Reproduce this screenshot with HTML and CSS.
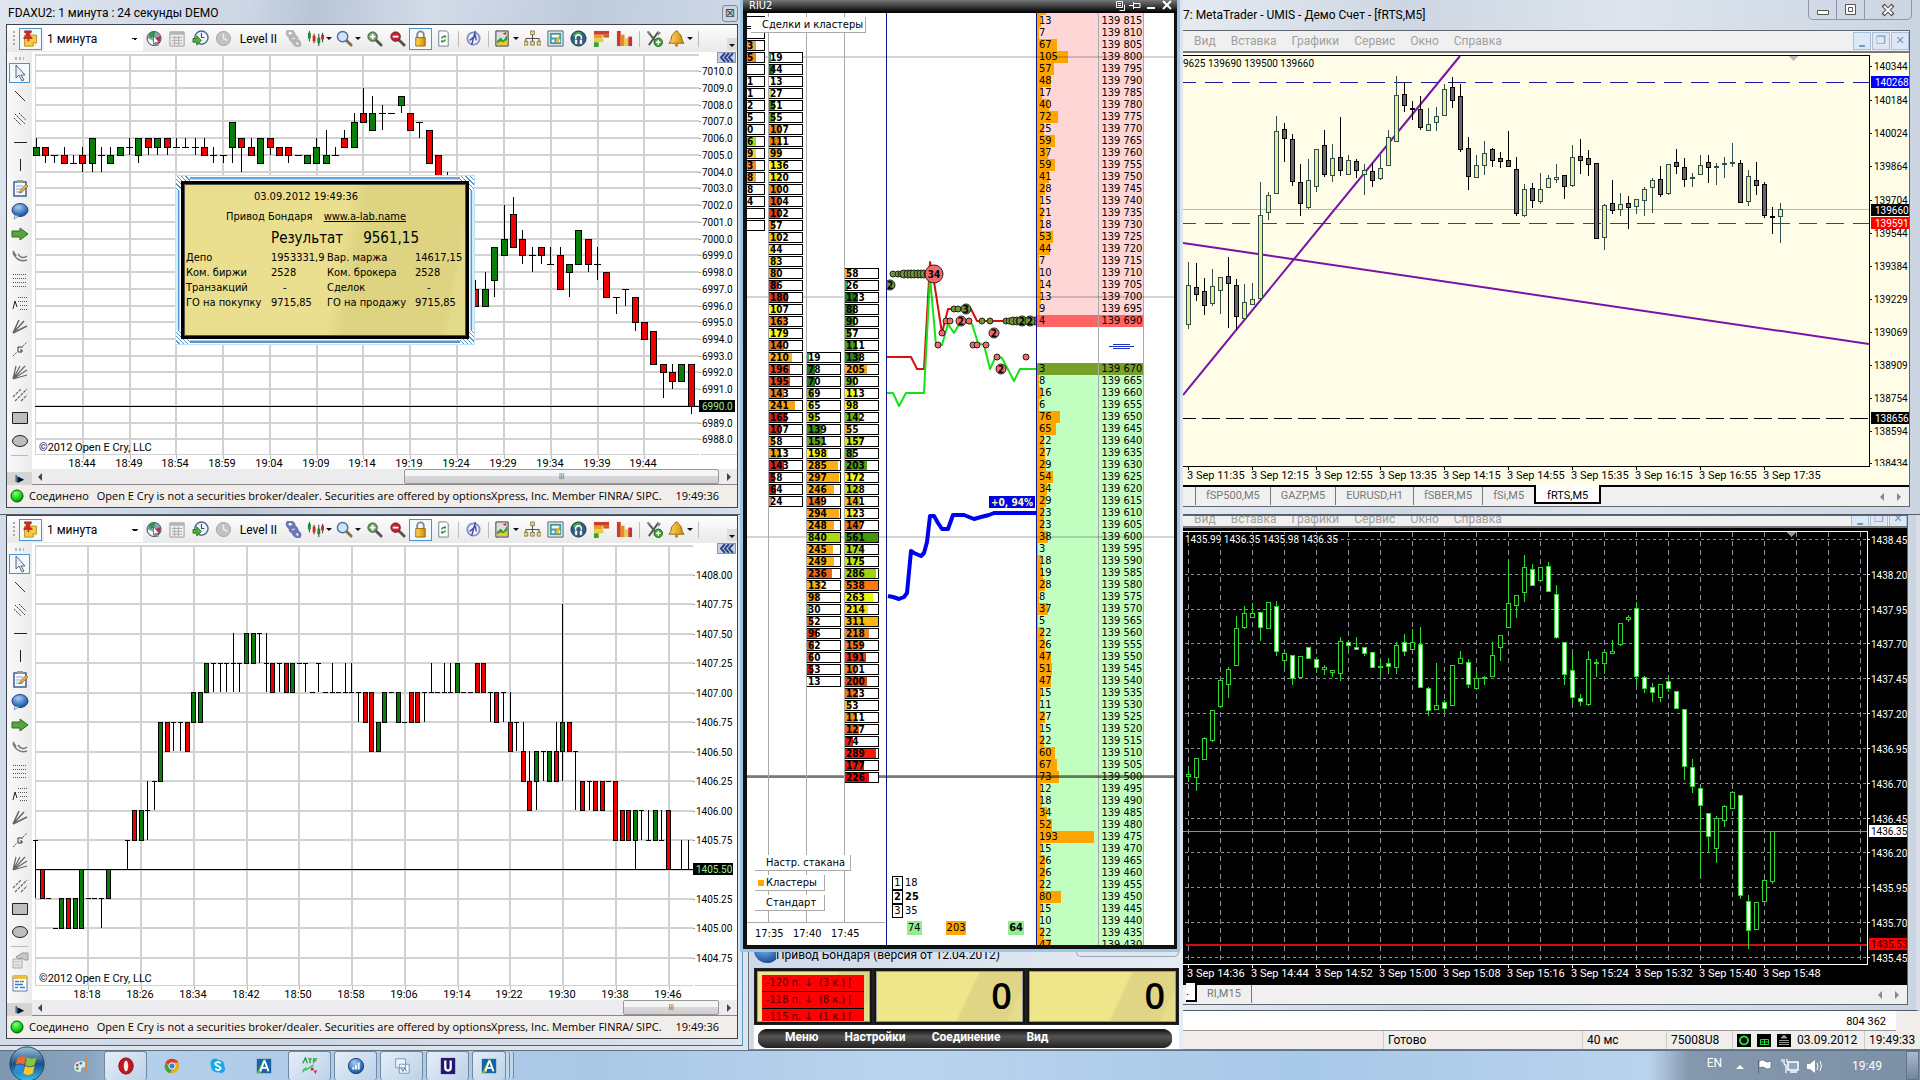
FILE: index.html
```html
<!DOCTYPE html>
<html lang="ru">
<head>
<meta charset="utf-8">
<title>Торговый стол</title>
<link rel="stylesheet" href="styles.css">
</head>
<body>
<svg class="defs" aria-hidden="true">
  <defs>
    <linearGradient id="gOrb" x1="0" y1="0" x2="0" y2="1"><stop offset="0" stop-color="#9fc4dc"/><stop offset=".5" stop-color="#1d4f86"/><stop offset="1" stop-color="#36c3f0"/></linearGradient>
    <radialGradient id="gBall" cx=".4" cy=".3" r=".8"><stop offset="0" stop-color="#8aff7a"/><stop offset=".6" stop-color="#0ad20a"/><stop offset="1" stop-color="#056b05"/></radialGradient>
    <radialGradient id="gBlue" cx=".4" cy=".3" r=".8"><stop offset="0" stop-color="#a9cdf2"/><stop offset=".6" stop-color="#3a78c0"/><stop offset="1" stop-color="#153f7e"/></radialGradient>
    <linearGradient id="gGold" x1="0" y1="0" x2="1" y2="0"><stop offset="0" stop-color="#ffd860"/><stop offset="1" stop-color="#d08a08"/></linearGradient>
  </defs>
  <symbol id="pin" viewBox="0 0 20 20"><path d="M3 6h14v9l-4 4H3z" fill="#f5cc45" stroke="#b08a10"/><path d="M13 19v-4h4" fill="#fff2a8" stroke="#b08a10"/><path d="M3 1h8v2l-2 1v3l3 2v1H8v3H7v-3H2V9l3-2V4L3 3z" fill="#d92626" stroke="#8a1010" stroke-width=".6"/></symbol>
  <symbol id="globe" viewBox="0 0 18 18"><circle cx="8.500" cy="9" r="7.500" fill="#8fa3b8" stroke="#4b5866"/><path d="M3 4q4-4 7-1l-2 4-4 2z" fill="#2c9a48"/><path d="M9 9l7-3-2 8z" fill="#c92a4a"/><path d="M2 9l5 2 1 5q-6-2-6-7z" fill="#fff"/><path d="M8 6v9l2-2 2 4 1-1-2-3h3z" fill="#fff" stroke="#333" stroke-width=".6"/></symbol>
  <symbol id="cal" viewBox="0 0 18 18"><path d="M1 2h15v15H1z" fill="#eee" stroke="#999"/><path d="M1 2h15v3H1z" fill="#b5b5b5"/><path d="M3 8h11M3 11h11M3 14h11M6 6v10M10 6v10" stroke="#aaa"/></symbol>
  <symbol id="clock" viewBox="0 0 18 18"><circle cx="10" cy="8" r="7" fill="#eef5fb" stroke="#4b6b8c" stroke-width="1.500"/><path d="M10 3v5h3" stroke="#234" fill="none"/><path d="M1 9h4V6l5 5-5 5v-3H1z" fill="#4fae3c" stroke="#1c6a16" stroke-width=".8"/></symbol>
  <symbol id="clockg" viewBox="0 0 18 18"><circle cx="9" cy="9" r="7.500" fill="#c2c2c2" stroke="#a5a5a5"/><path d="M9 4v5l4 2" stroke="#eee" fill="none" stroke-width="1.500"/></symbol>
  <symbol id="chain" viewBox="0 0 18 18"><g fill="none" stroke="currentColor" stroke-width="3"><rect x="2" y="1" width="8" height="6" rx="3" transform="rotate(40 6 4)"/><rect x="5" y="6" width="8" height="6" rx="3" transform="rotate(40 9 9)"/><rect x="8" y="11" width="8" height="5" rx="3" transform="rotate(40 12 14)"/></g></symbol>
  <symbol id="bars" viewBox="0 0 18 18"><path d="M2.500 1v11M7.500 4v10M12.500 4v13M16.500 3v10" stroke="#333"/><path d="M1 3h3v6H1z" fill="#1a8a2a"/><path d="M6 6h3v6H6z" fill="#d22"/><path d="M11 8h3v6h-3z" fill="#1a8a2a"/><path d="M15 5h3v5h-3z" fill="#d22"/></symbol>
  <symbol id="lens" viewBox="0 0 18 18"><path d="M10 10l6 6" stroke="#8a6a40" stroke-width="3" stroke-linecap="round"/><circle cx="7" cy="7" r="5.500" fill="#cfe2f7" stroke="#4a6fa5" stroke-width="1.500"/></symbol>
  <symbol id="plus" viewBox="0 0 18 18"><path d="M10 10l6 6" stroke="#555" stroke-width="3" stroke-linecap="round"/><circle cx="7" cy="7" r="5" fill="#6d9c62" stroke="#3c5d37"/><path d="M4 7h6M7 4v6" stroke="#fff" stroke-width="2"/></symbol>
  <symbol id="minus" viewBox="0 0 18 18"><path d="M10 10l6 6" stroke="#555" stroke-width="3" stroke-linecap="round"/><circle cx="7" cy="7" r="5" fill="#c3222e" stroke="#7a1018"/><path d="M4 7h6" stroke="#fff" stroke-width="2"/></symbol>
  <symbol id="lock" viewBox="0 0 18 18"><path d="M5.500 9V5a3.500 3.500 0 0 1 7 0v4" fill="none" stroke="#8a8a8a" stroke-width="2"/><path d="M4 8h10v9H4z" fill="url(#gGold)" stroke="#9a6a08"/></symbol>
  <symbol id="refresh" viewBox="0 0 18 18"><path d="M4 1h8l2 2v14H4z" fill="#fff" stroke="#6c7f94"/><path d="M7 9a3 3 0 0 1 4-2M11 10a3 3 0 0 1-4 2" fill="none" stroke="#2e8b3a" stroke-width="1.500"/><path d="M10 5l2 2-2 2zM8 10l-2 2 2 2z" fill="#2e8b3a"/></symbol>
  <symbol id="compass" viewBox="0 0 18 18"><circle cx="9" cy="9" r="6.500" fill="#eef" stroke="#8890c8" stroke-width="2"/><path d="M7 16L11 1M5 11l6-5 1 5" fill="none" stroke="#4450a0" stroke-width="1.500"/></symbol>
  <symbol id="chart" viewBox="0 0 18 18"><path d="M2 1h13v16H2z" fill="#ddd" stroke="#333"/><path d="M3 12l4-4 3 3 4-6v11H3z" fill="#2e9a3c"/><path d="M3 14l4-2 3 1 4-3v6H3z" fill="#e8c830"/><path d="M9 4l4-2v3z" fill="#c22"/></symbol>
  <symbol id="tree" viewBox="0 0 18 18"><path d="M9 4v5M2 13V9h14v4M9 9v4" fill="none" stroke="#444"/><path d="M7 1h4v4H7zM0 12h4v4H0zM7 12h4v4H7zM14 12h4v4h-4z" fill="#e8d48a" stroke="#7a6a30" stroke-width=".8"/></symbol>
  <symbol id="map" viewBox="0 0 18 18"><path d="M1 1h16v16H1z" fill="#e9eef2" stroke="#556"/><path d="M3 3h12v12H3z" fill="#3aa0a0"/><path d="M5 5h8v3H5zM5 10h3v3H5zM10 10h4v3h-4z" fill="#fff"/><path d="M10 7h3v6h-3z" fill="#e8b838"/></symbol>
  <symbol id="phones" viewBox="0 0 18 18"><circle cx="9" cy="9" r="8" fill="#2d5f8a" stroke="#234"/><path d="M3 5q5-5 9-2l-3 4-4 1z" fill="#3fae50"/><path d="M6 13V8a3 3 0 0 1 6 0v5" fill="none" stroke="#fff" stroke-width="1.500"/><path d="M5 10h3v5H5zM10 10h3v5h-3z" fill="#fff" stroke="#333" stroke-width=".5"/></symbol>
  <symbol id="hbars" viewBox="0 0 18 18"><path d="M1 1h16v4H1z" fill="#d03a2a"/><path d="M1 5h9v4H1z" fill="#e8a020"/><path d="M1 9h10v4H1z" fill="#e8cf40"/><path d="M11 5h6v3h-6z" fill="#c86020"/><path d="M1 13h5v5H1z" fill="#3fa03a"/></symbol>
  <symbol id="vbars" viewBox="0 0 18 18"><path d="M1 1h4v16H1z" fill="#d03a2a"/><path d="M5 5h4v12H5z" fill="#e88a20"/><path d="M9 9h4v8H9z" fill="#e8cf40"/><path d="M13 7h4v10h-4z" fill="#c8303a"/></symbol>
  <symbol id="tools" viewBox="0 0 18 18"><path d="M3 16L13 2M2 2l10 12" stroke="#555" stroke-width="2" fill="none"/><path d="M12 1l4 2-3 3zM1 1l4 1-2 3z" fill="#888"/><circle cx="13" cy="13" r="4.500" fill="#43a53c" stroke="#1d6a18"/><path d="M10.500 13h5M13 10.500v5" stroke="#fff" stroke-width="1.500"/></symbol>
  <symbol id="bell" viewBox="0 0 18 18"><path d="M9 1q2 0 2 2 4 2 4 8l2 3H1l2-3q0-6 4-8 0-2 2-2z" fill="url(#gGold)" stroke="#9a6008"/><circle cx="9" cy="16" r="1.800" fill="#c08010"/></symbol>
  <symbol id="t-cursor" viewBox="0 0 18 18"><path d="M5 1v13l3-3 3 6 2-1-3-5h4z" fill="#eef" stroke="#567"/></symbol>
  <symbol id="t-line" viewBox="0 0 18 18"><path d="M4 4l10 10" stroke="#333"/></symbol>
  <symbol id="t-par" viewBox="0 0 18 18"><path d="M3 8l7 7M4 4l10 10M8 3l7 7" stroke="#333" stroke-dasharray="2 1"/></symbol>
  <symbol id="t-h" viewBox="0 0 18 18"><path d="M3 9.500h13" stroke="#222"/></symbol>
  <symbol id="t-v" viewBox="0 0 18 18"><path d="M9.500 3v12" stroke="#222"/></symbol>
  <symbol id="t-note" viewBox="0 0 18 18"><path d="M3 3h12v14H3z" fill="#f7fafd" stroke="#3c5f92" stroke-width="1.500"/><path d="M6 1h6v3H6z" fill="#99a"/><path d="M5 7h7M5 10h6M5 13h7" stroke="#8aa5c8"/><path d="M9 12l6-7 2 2-6 6-3 1z" fill="#f0b030" stroke="#765010" stroke-width=".6"/></symbol>
  <symbol id="t-talk" viewBox="0 0 18 18"><ellipse cx="9" cy="8" rx="8" ry="6.500" fill="url(#gBlue)" stroke="#27427a"/><path d="M4 13l-1 4 5-3z" fill="#d5dff0" stroke="#5570a0" stroke-width=".6"/></symbol>
  <symbol id="t-arrow" viewBox="0 0 18 18"><path d="M1 6h8V3l8 6-8 6v-3H1z" fill="#5aa53a" stroke="#2f6a1c"/></symbol>
  <symbol id="t-arc" viewBox="0 0 18 18"><path d="M2 5q5 10 14 7M2 3l3 5M7 6q4 6 9 2" fill="none" stroke="#777" stroke-width="1.500"/></symbol>
  <symbol id="t-dots" viewBox="0 0 18 18"><path d="M2 3.500h14M2 7.500h14M2 11.500h14M2 15.500h14" stroke="#555" stroke-dasharray="1 1"/></symbol>
  <symbol id="t-adots" viewBox="0 0 18 18"><path d="M7 3.500h10M7 7.500h10M9 11.500h8M9 15.500h8" stroke="#555" stroke-dasharray="1 1"/><path d="M2 15l2-8 2 6" fill="none" stroke="#222"/></symbol>
  <symbol id="t-fan" viewBox="0 0 18 18"><path d="M2 16L8 3M2 16L13 4M2 16l14-7" stroke="#666" stroke-width="1.500"/></symbol>
  <symbol id="t-g" viewBox="0 0 18 18"><path d="M2 16l4-4M12 6l4-4" stroke="#555" stroke-dasharray="2 1"/><path d="M12 7H7v5h4V10H9" fill="none" stroke="#333"/></symbol>
  <symbol id="t-fan2" viewBox="0 0 18 18"><path d="M2 16L5 3M2 16L9 3M2 16L14 3M2 16L16 7M2 16l14-4" stroke="#666" stroke-width="1.200"/></symbol>
  <symbol id="t-chan" viewBox="0 0 18 18"><path d="M2 11l8-8M4 15L16 3M10 15l6-6" stroke="#666" stroke-width="1.200" stroke-dasharray="3 1"/></symbol>
  <symbol id="t-rect" viewBox="0 0 18 18"><path d="M1.500 3.500h15v11h-15z" fill="#bdbdbd" stroke="#222"/></symbol>
  <symbol id="t-ell" viewBox="0 0 18 18"><ellipse cx="9" cy="9" rx="7.500" ry="5.500" fill="#bdbdbd" stroke="#222"/></symbol>
  <symbol id="t-prop" viewBox="0 0 18 18"><path d="M2 8h9v9H2z" fill="#e5e5e5" stroke="#aaa"/><path d="M4 11h5M4 14h5" stroke="#bbb"/><path d="M5 6l6-4h6v7h-3l-3-2-3 1z" fill="#c8c8c8" stroke="#999"/></symbol>
  <symbol id="t-list" viewBox="0 0 18 18"><path d="M2 2h14v15H2z" fill="#fff" stroke="#5a7fb0"/><path d="M2 2h14v3H2z" fill="#eebc3c"/><path d="M4 7.500h4M4 10.500h8M9 13.500h5" stroke="#3a78c0" stroke-width="1.500"/><path d="M9 7.500h4M4 13.500h3" stroke="#3aa050" stroke-width="1.500"/></symbol>
</svg>

<template id="toolbar">
  <span class="grip"></span>
  <button class="tb on" title="Закрепить"><svg><use href="#pin"/></svg></button>
  <select class="period" aria-label="Период"><option>1 минута</option></select>
  <button class="tb"><svg><use href="#globe"/></svg></button>
  <button class="tb"><svg><use href="#cal"/></svg></button>
  <button class="tb"><svg><use href="#clock"/></svg></button>
  <button class="tb"><svg><use href="#clockg"/></svg></button>
  <button class="tb level">Level II</button>
  <button class="tb link"><svg><use href="#chain"/></svg></button>
  <button class="tb drop"><svg><use href="#bars"/></svg></button>
  <button class="tb drop"><svg><use href="#lens"/></svg></button>
  <button class="tb"><svg><use href="#plus"/></svg></button>
  <button class="tb"><svg><use href="#minus"/></svg></button>
  <button class="tb on"><svg><use href="#lock"/></svg></button>
  <button class="tb"><svg><use href="#refresh"/></svg></button>
  <span class="vsep"></span>
  <button class="tb"><svg><use href="#compass"/></svg></button>
  <span class="vsep"></span>
  <button class="tb drop"><svg><use href="#chart"/></svg></button>
  <button class="tb"><svg><use href="#tree"/></svg></button>
  <button class="tb"><svg><use href="#map"/></svg></button>
  <button class="tb"><svg><use href="#phones"/></svg></button>
  <button class="tb"><svg><use href="#hbars"/></svg></button>
  <button class="tb"><svg><use href="#vbars"/></svg></button>
  <span class="vsep"></span>
  <button class="tb"><svg><use href="#tools"/></svg></button>
  <button class="tb drop"><svg><use href="#bell"/></svg></button>
  <span class="vsep"></span>
  <button class="more" aria-label="Ещё"></button>
</template>

<div class="desktop">
  <div class="col col-left">
    <section class="oec oec-top">
      <header class="oec-title"><span>FDAXU2: 1 минута : 24 секунды DEMO</span><button class="mini-close" aria-label="Закрыть">⊠</button></header>
      <div class="oec-body">
        <div class="toolbar"></div>
        <div class="oec-main">
          <nav class="toolbox"></nav>
          <div class="oec-chart">
            <div class="plot-row">
              <svg class="plot" id="dax-plot"></svg><svg class="axis w38" id="dax-axis"></svg>
              <button class="chevrons" aria-label="Свернуть"><svg viewBox="0 0 17 9"><path d="M7 0L3 4.500 7 9M11 0L7 4.500 11 9M15 0l-4 4.500L15 9"/></svg></button>
            </div>
            <svg class="times" id="dax-times"></svg>
            <div class="scroll"><i class="arr l"></i><span class="thumb wide">|||</span><i class="arr r"></i></div>
          </div>
        </div>
        <footer class="oec-status"><svg class="ball"><circle cx="7" cy="7" r="6" fill="url(#gBall)" stroke="#0a5a0a"/></svg><span class="state">Соединено</span><span class="legal">Open E Cry is not a securities broker/dealer. Securities are offered by optionsXpress, Inc. Member FINRA/ SIPC.</span><time>19:49:36</time></footer>
      </div>
    </section>

    <section class="oec oec-bottom">
      <div class="oec-body">
        <div class="toolbar linked"></div>
        <div class="oec-main">
          <nav class="toolbox more-tools"></nav>
          <div class="oec-chart">
            <div class="plot-row">
              <svg class="plot" id="es-plot"></svg><svg class="axis w44" id="es-axis"></svg>
              <button class="chevrons" aria-label="Свернуть"><svg viewBox="0 0 17 9"><path d="M7 0L3 4.500 7 9M11 0L7 4.500 11 9M15 0l-4 4.500L15 9"/></svg></button>
            </div>
            <svg class="times" id="es-times"></svg>
            <div class="scroll"><i class="arr l"></i><span class="thumb">|||</span><i class="arr r"></i></div>
          </div>
        </div>
        <footer class="oec-status"><svg class="ball"><circle cx="7" cy="7" r="6" fill="url(#gBall)" stroke="#0a5a0a"/></svg><span class="state">Соединено</span><span class="legal">Open E Cry is not a securities broker/dealer. Securities are offered by optionsXpress, Inc. Member FINRA/ SIPC.</span><time>19:49:36</time></footer>
      </div>
    </section>
  </div>

  <div class="col col-mid">
    <section class="riu">
      <header class="riu-title"><span>RIU2</span>
        <svg class="riu-icons" fill="none" stroke="#fff"><path d="M7.500 1.500h6v6h-6zM10.500 10.500h5v-6M9 3.500h3M9 5.500h3M20 5.500h4M24.500 2v7M25 3.500h6v4h-6"/><path d="M38 8h8" stroke-width="2"/><path d="M54 1l8 8M62 1l-8 8" stroke-width="2"/></svg>
      </header>
      <div class="riu-body">
        <div class="clusters">
          <div class="cluster-cols" id="clusters"></div>
          <div class="cluster-times"><span>17:35</span><span>17:40</span><span>17:45</span></div>
          <button class="flat head">Сделки и кластеры</button>
          <div class="flat-group">
            <button class="flat">Настр. стакана</button>
            <button class="flat marked">Кластеры</button>
            <button class="flat">Стандарт</button>
          </div>
        </div>
        <div class="trades">
          <svg id="trades"></svg>
          <ol class="lots"><li><b>1</b>18</li><li class="cur"><b>2</b>25</li><li><b>3</b>35</li></ol>
          <div class="sums"><span>74</span><span class="o">203</span><span class="last">64</span></div>
        </div>
        <div class="ladder"><div class="part"></div><table id="ladder"></table></div>
      </div>
    </section>

    <section class="privod">
      <header><svg class="pv-icon"><circle cx="13" cy="0" r="13" fill="url(#gBlue)"/></svg><span>Привод Бондаря (версия от 12.04.2012)</span><i></i></header>
      <div class="pv-panels">
        <div class="lcd orders"><ul><li>-120 п. ↓ &nbsp;(3 к.) [</li><li>-118 п. ↓ &nbsp;(8 к.) [</li><li>-115 п. ↓ &nbsp;(1 к.) [</li></ul></div>
        <div class="lcd num">0</div>
        <div class="lcd num">0</div>
      </div>
      <nav class="pv-menu"><a href="#m">Меню</a><a href="#s">Настройки</a><a href="#c">Соединение</a><a href="#v">Вид</a></nav>
    </section>
  </div>

  <div class="col col-right">
    <section class="mt mt-top">
      <header class="mt-title"><span>7: MetaTrader - UMIS - Демо Счет - [fRTS,M5]</span>
        <div class="caps"><button aria-label="Свернуть"><svg><path d="M8.500 10.500h11v4h-11z" fill="#fff" stroke="#555"/></svg></button><button aria-label="Развернуть"><svg><path d="M8.500 4.500h10v10h-10zM11.500 7.500h4v4h-4z" fill="#fff" stroke="#555"/></svg></button><button class="x" aria-label="Закрыть"><svg><path d="M18 5l10 10M28 5L18 15" stroke="#555" stroke-width="4"/><path d="M19 6l8 8M27 6l-8 8" stroke="#fff" stroke-width="2"/></svg></button></div>
      </header>
      <div class="mt-body">
        <nav class="mt-menu"><a href="#1">Вид</a><a href="#2">Вставка</a><a href="#3">Графики</a><a href="#4">Сервис</a><a href="#5">Окно</a><a href="#6">Справка</a><span class="mdi"><button>‗</button><button>❐</button><button>✕</button></span></nav>
        <div class="mt-chart light"><svg class="plot" id="rts-plot"></svg><svg class="axis w40" id="rts-axis"></svg></div>
        <svg class="mt-times light" id="rts-times"></svg>
        <nav class="tabs"><a href="#a">fSP500,M5</a><a href="#b">GAZP,M5</a><a href="#c1">EURUSD,H1</a><a href="#d">fSBER,M5</a><a href="#e">fSi,M5</a><a class="active" href="#f">fRTS,M5</a><i class="arr l"></i><i class="arr r"></i></nav>
      </div>
    </section>

    <section class="mt mt-bottom">
      <div class="mt-body">
        <nav class="mt-menu cut"><a href="#1">Вид</a><a href="#2">Вставка</a><a href="#3">Графики</a><a href="#4">Сервис</a><a href="#5">Окно</a><a href="#6">Справка</a><span class="mdi"><button>‗</button><button>❐</button><button>✕</button></span></nav>
        <div class="mt-chart dark"><svg class="plot" id="sp-plot"></svg><svg class="axis w40" id="sp-axis"></svg></div>
        <svg class="mt-times dark" id="sp-times"></svg>
        <nav class="tabs second"><a class="active stub" href="#g">.</a><a href="#h">RI,M15</a><i class="arr l"></i><i class="arr r"></i></nav>
      </div>
    </section>

    <section class="back">
      <div class="back-row">804 362</div>
      <footer class="back-status">
        <span class="ready">Готово</span><span class="ping">40 мс</span><span class="acct">75008U8</span>
        <span class="leds"><svg><rect width="14" height="13"/><circle cx="7" cy="6.500" r="4" fill="none" stroke="#1fdc3a" stroke-width="2"/></svg><svg><rect width="14" height="13"/><path d="M3.500 5.500h8v5h-8zM7.500 5.500v5M3.500 8h8" fill="none" stroke="#1fdc3a"/></svg><svg><rect width="14" height="13"/><path d="M7 1l3 3H4zM2 6.500h10M2 8.500h10M2 10.500h10" stroke="#999" fill="#999"/></svg>03.09.2012</span>
        <time>19:49:33</time>
      </footer>
    </section>
  </div>

  <aside class="result">
    <div class="result-in">
      <p class="when">03.09.2012 19:49:36</p>
      <p class="who">Привод Бондаря <a href="#lab">www.a-lab.name</a></p>
      <p class="sum"><span>Результат</span><span>9561,15</span></p>
      <table>
        <tr><td>Депо</td><td>1953331,9</td><td>Вар. маржа</td><td>14617,15</td></tr>
        <tr><td>Ком. биржи</td><td>2528</td><td>Ком. брокера</td><td>2528</td></tr>
        <tr><td>Транзакций</td><td class="dash">-</td><td>Сделок</td><td class="dash">-</td></tr>
        <tr><td>ГО на покупку</td><td>9715,85</td><td>ГО на продажу</td><td>9715,85</td></tr>
      </table>
    </div>
  </aside>
</div>

<footer class="taskbar">
  <button class="start" aria-label="Пуск"><svg viewBox="0 0 40 36"><circle cx="20" cy="18" r="18" fill="url(#gOrb)" stroke="#23415f"/><path d="M10 12q5-4 9-1l-2 8q-4-3-9 0z" fill="#ef6a2a"/><path d="M20 11q5 3 10 0l-2 8q-5 3-10 0z" fill="#8ac43a"/><path d="M8 20q5-3 9 0l-2 8q-4-3-9 0z" fill="#2f8ee0"/><path d="M18 20q5 3 10 0l-2 8q-5 3-10 0z" fill="#f8c822"/></svg></button>
  <button class="task"><svg viewBox="0 0 20 20"><path d="M3 12q0-8 8-8 7 0 6 6-1 3-4 2-2 0-1 3 0 3-4 2-5-1-5-5z" fill="#dfe9f2" stroke="#7895ad"/><circle cx="7" cy="9" r="1.500" fill="#d33"/><circle cx="11" cy="7" r="1.500" fill="#38a"/><circle cx="7" cy="13" r="1.500" fill="#3a3"/><path d="M17 1l-1 17" stroke="#d88a3a" stroke-width="2"/></svg></button>
  <button class="task open"><svg viewBox="0 0 20 20"><ellipse cx="10" cy="10" rx="8" ry="9" fill="#c8141c" stroke="#7a0a10"/><ellipse cx="10" cy="10" rx="2.500" ry="6" fill="#f2eaea"/></svg></button>
  <button class="task"><svg viewBox="0 0 20 20"><circle cx="10" cy="10" r="8" fill="#e3b21c"/><path d="M3 6a8 8 0 0 1 14 0h-7a4 4 0 0 0-4 3z" fill="#d93a2c"/><path d="M3 6l4 6 3 2-2 4A8 8 0 0 1 3 6z" fill="#3aa346"/><circle cx="10" cy="10" r="3.500" fill="#3d7fd8" stroke="#fff"/></svg></button>
  <button class="task"><svg viewBox="0 0 20 20"><path d="M5 2q3-1 5 1 7 0 7 7 2 3 0 6-3 3-6 1-8 1-9-7Q0 4 5 2z" fill="#1ba8e8"/><path d="M13 7q-3-3-6 0 0 2 3 3t3 3q-3 3-6 0" fill="none" stroke="#fff" stroke-width="2"/></svg></button>
  <button class="task"><svg viewBox="0 0 20 20"><path d="M2 2h16v16H2z" fill="#1663a8"/><path d="M2 18l8-16h2L6 18z" fill="#7ab83c"/><path d="M6 16l4-11h1l4 11M8 12h5" fill="none" stroke="#fff" stroke-width="2"/></svg></button>
  <button class="task open"><svg viewBox="0 0 20 20"><path d="M2 7l3-6 2 6M8 2h4M10 2v5M14 7V2h4M14 4h3" fill="none" stroke="#2f9a3a" stroke-width="1.500"/><path d="M2 14l4-3v2l8-5v2l-8 5H4l-3 3z" fill="#32c84a"/><path d="M11 12h3v3h-3zM14 15h4l-2 4z" fill="#d22a3a"/></svg></button>
  <button class="task open"><svg viewBox="0 0 20 20"><circle cx="10" cy="10" r="8.500" fill="url(#gBlue)" stroke="#163a70"/><path d="M7 14v-3M10 14V9M13 14V6" stroke="#fff" stroke-width="2"/></svg></button>
  <button class="task open"><svg viewBox="0 0 20 20"><path d="M3 2h11v10H3zM7 8h11v10H7z" fill="#eef4fa" stroke="#6e93b8"/><path d="M9 12l2 4 2-4 2 4" fill="none" stroke="#3a78c0"/></svg></button>
  <button class="task open"><svg viewBox="0 0 20 20"><path d="M2 1h16v18H2z" fill="#27186e"/><path d="M7 4v8q0 3 3 3t3-3V4" fill="none" stroke="#fff" stroke-width="2.500"/></svg></button>
  <button class="task open stack"><svg viewBox="0 0 20 20"><path d="M2 2h16v16H2z" fill="#1663a8"/><path d="M2 18l8-16h2L6 18z" fill="#7ab83c"/><path d="M6 16l4-11h1l4 11M8 12h5" fill="none" stroke="#fff" stroke-width="2"/></svg></button>
  <div class="tray">
    <span class="lang">EN</span>
    <svg viewBox="0 0 100 20"><path d="M9 13l4-4 4 4z" fill="#fff"/><path d="M31.500 4v14M32 5q4-2 6 0t6 0v7q-4 2-6 0t-6 0z" fill="#fff" stroke="#44566a" stroke-width=".6"/><path d="M61 6h10v8H61zM63 16h7" fill="#8fa8c0" stroke="#fff" stroke-width="1.500"/><path d="M57 3v4q0 2 2 2v8M55 3v3M60 3v3" stroke="#fff" fill="none" stroke-width="1.200"/><path d="M80 8h3l5-4v13l-5-4h-3z" fill="#fff"/><path d="M90 7q2 3 0 7M93 5q3 5 0 10" stroke="#fff" fill="none"/></svg>
    <time>19:49</time>
  </div>
  <button class="peek" aria-label="Показать рабочий стол"></button>
</footer>
<script src="charts.js"></script>
</body>
</html>
```
FILE: styles.css
```css
* { box-sizing: border-box; }
:root {
  --ui: Roboto, "Open Sans", sans-serif;
  --small: "DejaVu Sans Condensed", "DejaVu Sans", sans-serif;
}
html, body { height: 100%; margin: 0; }
body { display: flex; flex-direction: column; overflow: hidden; background: #b4cde8; font: 12px/16px var(--ui); color: #000; }
button { padding: 0; border: 0; background: none; font: inherit; color: inherit; }
a { color: inherit; text-decoration: none; }
p, ul, ol { margin: 0; padding: 0; list-style: none; }
svg { display: block; overflow: hidden; }
.defs { position: absolute; width: 0; height: 0; }
svg text { font: 11px var(--ui); }
.axis text, svg text.quote { font-size: 10px; }

.desktop { position: relative; flex: 1; min-height: 0; display: grid; grid-template-columns: 743fr 440fr 737fr; background: #dfe3ea; }
.col { display: flex; flex-direction: column; min-width: 0; min-height: 0; }
.arr { width: 0; height: 0; border: 4px solid transparent; }
.arr.l { border-right-color: #444; border-left-width: 0; }
.arr.r { border-left-color: #444; border-right-width: 0; }

/* Open E Cry windows */
.col-left { padding-bottom: 4px; }
.oec { display: flex; flex-direction: column; min-height: 0; padding: 0 4px 6px 6px; background: linear-gradient(90deg, #d3dcea, #cdd6e4 40%, #dde4ee); border-left: 0; border-right: 1px solid #5a9ccb; border-bottom: 1px solid #555e68; }
.oec-top { flex: 508 1 0; background: linear-gradient(100deg, #dfe6ef 0, #ccd6e4 30%, #b9c5d6 38%, #d3dbe8 52%, #bfcbdc 70%, #d5deea); }
.oec-bottom { flex: 524 1 0; }
.oec-title { flex: 0 0 24px; display: flex; align-items: center; justify-content: space-between; padding: 2px 0 0 2px; }
.mini-close { width: 16px; height: 17px; border: 1px solid #7d8896; border-radius: 3px; font: 12px/14px "DejaVu Sans", sans-serif; color: #444; }
.oec-body { flex: 1; min-height: 0; display: flex; flex-direction: column; border: 1px solid #40454c; background: #fff; }
.toolbar { flex: 0 0 27px; display: flex; align-items: center; padding-left: 6px; background: linear-gradient(#fdfdfd, #e9e9ea); position: relative; }
.grip { width: 2px; height: 15px; margin-right: 4px; background: repeating-linear-gradient(#aaa 0 2px, transparent 2px 4px); }
.tb { flex: 0 0 23px; height: 22px; display: flex; align-items: center; justify-content: center; }
.tb svg { width: 17px; height: 17px; color: #b5b5b5; }
.linked .link svg { color: #6b77b5; }
.tb.on { border: 1px solid #4a94cf; background: #f3f9fd; }
.tb.level { flex-basis: 47px; }
.tb.drop { flex-basis: 29px; }
.tb.drop::after { content: ""; border: 3px solid transparent; border-top-color: #111; border-bottom: 0; margin-left: 2px; }
.period { flex: 0 0 99px; height: 24px; margin-left: 2px; padding: 0 0 0 3px; border: 0; border-radius: 0; font: 12px/20px var(--ui); color: #000; appearance: none;
  background: linear-gradient(45deg, transparent 50%, #111 50%) 88px 11px / 3px 3px no-repeat, linear-gradient(-45deg, transparent 50%, #111 50%) 91px 11px / 3px 3px no-repeat, #fff; }
.vsep { flex: 0 0 1px; height: 16px; margin: 0 3px; background: #bbb; }
.more { position: absolute; right: 0; bottom: 2px; width: 10px; height: 12px; background: #ddd; }
.more::after { content: ""; display: block; margin: 3px 2px 0; border: 3px solid transparent; border-top-color: #111; border-bottom: 0; }
.oec-main { flex: 1; min-height: 0; display: flex; }
.toolbox { flex: 0 0 25px; display: flex; flex-direction: column; align-items: center; padding-top: 5px; background: linear-gradient(90deg, #fafafa, #ebebeb); }
.toolbox .dots { flex: 0 0 3px; width: 9px; margin-bottom: 3px; background: repeating-linear-gradient(90deg, #bbb 0 2px, transparent 2px 4px); }
.toolbox button { flex: 0 0 20px; width: 21px; margin-bottom: 3px; display: flex; align-items: center; justify-content: center; }
.toolbox button svg { width: 18px; height: 18px; }
.toolbox button.on { border: 1px solid #4a94cf; background: #f3f9fd; }
.toolbox hr { flex: 0 0 1px; width: 17px; margin: 1px 0 3px; border: 0; background: #bbb; }
.toolbox .play { margin: auto 0 0; flex-basis: 13px; width: 100%; background: #d5d5d5; color: #111; font: 9px/12px "DejaVu Sans", sans-serif; }
.oec-chart { flex: 1; min-width: 0; display: flex; flex-direction: column; }
.plot-row { flex: 1; min-height: 0; display: flex; position: relative; }
.plot { flex: 1; min-width: 0; height: 100%; }
.axis { height: 100%; flex: none; }
.w38 { width: 38px; } .w40 { width: 40px; } .w44 { width: 44px; }
.chevrons { position: absolute; right: 1px; top: 0; width: 19px; height: 11px; background: #c9d2e2; border: 1px solid #8a97ae; }
.chevrons svg { width: 17px; height: 9px; fill: none; stroke: #26418a; stroke-width: 2; }
.times { flex: 0 0 14px; width: 100%; }
.scroll { flex: 0 0 16px; display: flex; align-items: center; background: #ececee; padding: 0 6px; border-bottom: 1px solid #888; }
.thumb { width: 13.800%; height: 15px; margin-left: auto; margin-right: 8px; border: 1px solid #999; border-radius: 2px; background: linear-gradient(#f5f5f5 45%, #d8d8da 50%, #cfcfd2); text-align: center; font: bold 7px/12px var(--ui); color: #555; }
.thumb.wide { width: 45.400%; }
.oec-status { flex: 0 0 22px; display: flex; align-items: center; padding: 0 18px 0 3px; background: #f0edeb; white-space: nowrap; font: 11px/16px "Open Sans", sans-serif; overflow: hidden; }
.ball { width: 14px; height: 14px; flex: none; margin-right: 5px; }
.legal { margin-left: 8px; }
.oec-status time { margin-left: auto; }

/* result popup */
.result { position: absolute; left: 175px; top: 175px; width: 300px; height: 170px; padding: 5px; border: 1px solid #bfe3f8; background: repeating-linear-gradient(45deg, #fff 0 2px, #5b93c4 2px 3px); }
.result::before { content: ""; position: absolute; inset: 0 14px; background: linear-gradient(#fff 0 1px, #6aa7d8 1px 3px, #fff 4px calc(100% - 4px), #5b93c4 calc(100% - 3px) calc(100% - 1px), #fff 0); }
.result::after { content: ""; position: absolute; inset: 14px 0; background: linear-gradient(90deg, #d5eefc 0 2px, #5b9cd0 2px 3px, #fff 4px calc(100% - 4px), #5b9cd0 calc(100% - 3px) calc(100% - 2px), #d5eefc 0); }
.result-in { position: relative; z-index: 1; height: 100%; border: 3px solid #000; outline: 1px solid #55504a; outline-offset: -4px; padding: 3px 2px; background: linear-gradient(100deg, #e9df8e 0 54%, #ddd381 60% 92%, #e3da8a 94%); font: 11px/15px var(--small); }
.when { text-align: center; padding-right: 38px; line-height: 20px; }
.who { padding-left: 40px; line-height: 20px; white-space: nowrap; }
.who a { text-decoration: underline; margin-left: 8px; }
.sum { display: flex; gap: 20px; padding-left: 85px; font-size: 15px; line-height: 23px; }
.result table { border-collapse: collapse; table-layout: fixed; width: 282px; }
.result td { padding: 0; line-height: 15px; white-space: nowrap; }
.result td:nth-child(1) { width: 85px; } .result td:nth-child(2) { width: 56px; } .result td:nth-child(3) { width: 88px; }
.result .dash { padding-left: 12px; }

/* order book window */
.riu { flex: 945 1 0; min-height: 0; display: flex; flex-direction: column; margin-right: 6px; border: solid #111; border-width: 0 3px 4px 4px; outline: 3px solid #9cc8e6; background: #fff; z-index: 1; }
.riu-title { flex: 0 0 13px; display: flex; justify-content: space-between; margin: 0 -3px 0 -4px; padding: 0 4px 0 6px; background: linear-gradient(#777, #222 70%, #000); color: #fff; font: 11px/11px var(--small); }
.riu-icons { width: 64px; height: 12px; }
.riu-body { flex: 1; min-height: 0; display: flex; position: relative; overflow: hidden; padding-right: 30px; }
.riu-body::after { content: ""; position: absolute; inset: 0; pointer-events: none; background: linear-gradient(transparent 762px, rgba(0,0,0,.42) 762px 765px, transparent 765px), repeating-linear-gradient(transparent 0 43px, rgba(0,0,0,.17) 43px 45px, transparent 45px 240px); }
.clusters { flex: 0 0 138px; display: flex; flex-direction: column; position: relative; z-index: 1; font: bold 10px/11px var(--small); }
.cluster-cols { flex: 1; min-height: 0; overflow: hidden; display: grid; grid-template-columns: 21px 38px 38px 41px; border-bottom: 1px solid #aaa; margin-right: 1px; }
.cluster-cols > div { border-left: 1px solid #aaa; min-height: 0; }
.cluster-cols > div:first-child { border-left: 0; }
.cell { width: 34px; height: 11px; margin-bottom: 1px; padding-left: 1px; border: 1px solid #000; border-left: 0; line-height: 10px; background: linear-gradient(90deg, var(--c) var(--w), #fff 0); }
.c0 .cell { width: 18px; padding-left: 0; }
.cluster-times { flex: 0 0 19px; display: flex; gap: 9px; padding-left: 8px; font: 11px/22px var(--small); }
.cluster-times span { width: 29px; }
.flat { height: 16px; padding: 0 12px; background: #fff; border: solid #aaa; border-width: 0 1px 1px 0; font: 11px/14px var(--small); text-align: left; position: relative; white-space: nowrap; }
.flat.head { position: absolute; left: 4px; top: 4px; width: 115px; padding: 0 0 0 11px; }
.flat-group { position: absolute; left: 8px; bottom: 34px; display: flex; flex-direction: column; align-items: flex-start; gap: 4px; }
.flat-group .flat { padding: 0 5px 0 11px; min-width: 70px; }
.flat.marked::before { content: ""; position: absolute; left: 3px; top: 5px; width: 6px; height: 6px; background: #ffa500; }
.trades { flex: 1; min-width: 0; display: flex; flex-direction: column; border: solid #10108c; border-width: 0 1px; padding-bottom: 10px; font: 11px/14px var(--small); }
.trades svg { flex: 1; min-height: 0; width: 100%; }
.trades svg text { font: bold 10px var(--small); text-anchor: middle; }
.lots { padding: 2px 0 2px 5px; }
.lots li { display: flex; gap: 2px; height: 14px; line-height: 13px; }
.lots b { width: 11px; height: 14px; border: 1px solid #000; font-weight: inherit; text-align: center; line-height: 12px; }
.lots .cur { font-weight: bold; }
.sums { display: flex; padding: 1px 12px 0 20px; gap: 24px; line-height: 14px; }
.sums span { background: #90ee90; padding: 0 1px; }
.sums .o { background: #ffa500; }
.sums .last { margin-left: auto; font-weight: bold; }
.ladder { flex: 0 0 107px; overflow: hidden; }
.part { height: 2px; background: linear-gradient(90deg, #ffa500 9px, #ffd6d6 9px 60px, #aaa 60px 61px, #ffd6d6 61px 106px, #aaa 0); }
.ladder table { border-collapse: collapse; table-layout: fixed; width: 107px; font: 11px/12px var(--small); }
.ladder tr { height: 12px; }
.ladder td { padding: 0 0 0 2px; height: 12px; line-height: 12px; white-space: nowrap; border-right: 1px solid #aaa; }
.ladder td:first-child { width: 61px; background: linear-gradient(90deg, #ffa500 var(--w), transparent 0); }
.ladder td:last-child { padding-left: 3px; }
.ask { background: #ffd6d6; } .bid { background: #c0ffc0; }
.ask.best { background: #ff6464; } .bid.best { background: #76a028; }
.ladder .best td:first-child { background: none; }
.spread svg { width: 26px; height: 7px; margin: 2px 0 0 7px; }

/* trade panel */
.privod { flex: 100 1 0; display: flex; flex-direction: column; margin-left: 5px; padding: 0 4px 0 5px; background: linear-gradient(90deg, #cfd9e8, #e6ecf4); border-left: 1px solid #66707c; border-bottom: 1px solid #888; min-height: 0; }
.privod header { flex: 0 0 19px; display: flex; gap: 0; align-items: flex-start; overflow: hidden; line-height: 12px; }
.privod header i { width: 103px; height: 8px; margin: 0 0 0 auto; border: 1px solid #9aa4b2; border-top: 0; border-radius: 0 0 5px 5px; background: #dfe6ef; }
.pv-icon { width: 22px; height: 14px; margin-top: 1px; }
.pv-panels { flex: 0 0 56px; display: flex; background: #222; gap: 2px; padding: 1px; }
.lcd { flex: 153 1 0; border: 3px solid #161616; outline: 1px solid #999; outline-offset: -3px; background: linear-gradient(115deg, #efe68c 0 60%, #dfd584 62% 90%, #e6dd8a 92%); overflow: hidden; }
.num { text-align: right; padding-right: 10px; font: 600 36px/48px "Open Sans", sans-serif; }
.orders { flex-grow: 115; padding: 3px 5px 0 4px; }
.orders ul { background: #f00; overflow: hidden; height: 46px; }
.orders li { height: 17px; padding-left: 4px; border-bottom: 1px solid #000; font: 11px/16px var(--small); color: #500000; white-space: nowrap; }
.pv-menu { position: relative; flex: 1; display: flex; align-items: center; background: linear-gradient(#111, #555 40%, #222) 4px 4px / calc(100% - 11px) 19px no-repeat, #fff; padding: 2px 0 2px 31px; font-weight: bold; color: #fff; }
.pv-menu::before, .pv-menu::after { content: ""; position: absolute; top: 4px; width: 9px; height: 19px; background: radial-gradient(circle at 100% 50%, transparent 9px, #fff 10px); }
.pv-menu::before { left: 4px; }
.pv-menu::after { right: 7px; background: radial-gradient(circle at 0 50%, transparent 9px, #fff 10px); }
.pv-menu a { margin-right: 26px; line-height: 18px; }

/* MetaTrader windows */
.mt { display: flex; flex-direction: column; min-height: 0; padding: 0 10px 7px 0; background: linear-gradient(90deg, #e6ebf2, #cdd6e2 30%, #dde4ed 60%, #cbd5e2); border-bottom: 1px solid #555e68; }
.mt-top { flex: 507 1 0; }
.mt-bottom { flex: 490 1 0; padding: 0 8px 5px 0; border-right: 4px solid #d9dee8; }
.mt-title { flex: 0 0 29px; display: flex; justify-content: space-between; line-height: 30px; }
.caps { display: flex; height: 20px; border: 1px solid #8c97a5; border-top: 0; border-radius: 0 0 5px 5px; margin-right: -2px; }
.caps button { width: 28px; border-right: 1px solid #8c97a5; }
.caps button.x { width: 46px; border: 0; }
.caps svg { width: 100%; height: 20px; }
.mt-body { flex: 1; min-height: 0; display: flex; flex-direction: column; border: 1px solid #5f666f; border-left: 0; background: #f0f0f0; }
.mt-menu { flex: 0 0 22px; min-height: 0; display: flex; align-items: center; gap: 15px; padding-left: 11px; color: #a0a0a0; border-bottom: 2px solid #777; }
.mt-menu.cut { flex-basis: 12px; line-height: 10px; overflow: hidden; padding-bottom: 4px; }
.mdi { display: flex; gap: 1px; margin-left: auto; }
.mdi button { width: 18px; height: 18px; border: 1px solid #a9bfd8; background: #dce8f5; color: #7a93ae; font: bold 11px/14px "DejaVu Sans", sans-serif; }
.mt-chart { flex: 1; min-height: 0; display: flex; }
.mt-times { flex: 0 0 19px; width: 100%; }
.light { background: #fffde8; } .dark { background: #000; }
.dark text { fill: #fff; }
.tabs { flex: 0 0 21px; display: flex; align-items: flex-start; padding-right: 4px; border-top: 2px solid #000; color: #777; font-size: 11px; line-height: 18px; }
.tabs a { padding: 0 10px; }
.tabs a + a { border-left: 1px solid #777; }
.tabs a:first-child { border-left: 1px solid #777; margin-left: 12px; }
.tabs a.active { height: 19px; margin-top: -2px; padding: 2px 11px 0; background: #fff; color: #000; border: solid #000; border-width: 0 2px 2px; line-height: 17px; }
.tabs a.stub { margin-left: 3px; padding: 0 6px 0 0; border-left: 0; }
.tabs.second a + a { border-left: 0; border-right: 1px solid #777; }
.tabs .arr { margin: 6px 4px 0 9px; }
.tabs .arr.l { margin-left: auto; border-right-color: #888; } .tabs .arr.r { border-left-color: #888; }
.back { flex: 39 1 0; min-height: 0; display: flex; flex-direction: column; background: #f0edeb; }
.back-row { flex: 1; background: #fff; margin-right: 24px; padding: 3px 10px 0 0; text-align: right; line-height: 16px; border-bottom: 1px solid #999; font-size: 11px; }
.back-status { flex: 0 0 19px; display: flex; align-items: center; line-height: 18px; border-bottom: 1px solid #777; }
.back-status > * { border-left: 1px solid #ccc; padding-left: 4px; white-space: nowrap; }
.ready { margin-left: auto; flex: 0 0 199px; } .ping { flex: 0 0 84px; } .acct { flex: 0 0 66px; }
.leds { flex: 0 0 132px; display: flex; align-items: center; gap: 6px; }
.leds svg { width: 14px; height: 13px; }
.back-status time { flex: 0 0 56px; }

/* taskbar */
.taskbar { flex: 0 0 30px; min-height: 0; display: flex; align-items: stretch; border-top: 1px solid #5d7287; background: linear-gradient(90deg, #7e97b0 0, #8aa5c0 90px, #b3cfea 150px, #aac8e6 600px, #bad4ee 900px, #a8c8e8 1300px, #b9d3ed calc(100% - 270px), #8497ad calc(100% - 230px), #7d90a6); z-index: 2; }
.start { width: 58px; height: 36px; margin: -5px 0 -3px; padding-left: 8px; }
.start svg { width: 38px; height: 36px; }
.task { width: 43px; margin-right: 3px; display: flex; align-items: center; justify-content: center; }
.task svg { width: 18px; height: 18px; }
.task.open { border: 1px solid #7288a0; border-bottom: 0; border-radius: 3px; background: linear-gradient(135deg, #e4eef8, #bcd2e8); }
.task.stack { width: 34px; box-shadow: 4px 0 0 -1px #c4d8ec, 5px 0 0 -1px #7288a0, 8px 0 0 -1px #c4d8ec, 9px 0 0 -1px #7288a0; }
.tray { margin-left: auto; display: flex; align-items: center; color: #fff; }
.lang { line-height: 24px; align-self: flex-start; }
.tray svg { width: 100px; height: 20px; margin: 0 25px 0 5px; }
.peek { width: 13px; margin: 0 1px 0 24px; border: 1px solid #5f7389; background: linear-gradient(#a9bace, #71859c); }
```
FILE: charts.js
```js
const $ = id => document.getElementById(id);
const line = (x1, y1, x2, y2, c, w = 1, d = '') =>
  `<line x1="${x1}" y1="${y1}" x2="${x2}" y2="${y2}" stroke="${c}" stroke-width="${w}"${d ? ` stroke-dasharray="${d}"` : ''}/>`;
const rect = (x, y, w, h, f, s = 'none') => `<rect x="${x}" y="${y}" width="${w}" height="${h}" fill="${f}" stroke="${s}"/>`;
const text = (x, y, t, a = '') => `<text x="${x}" y="${y}" ${a}>${t}</text>`;
const put = (id, ox, oy, s) => { $(id).innerHTML = `<g transform="translate(${-ox} ${-oy})" shape-rendering="crispEdges">${s}</g>`; };
const half = v => Math.floor(v) + 0.5;

/* toolbars shared by both chart windows */
document.querySelectorAll('.toolbar').forEach(t => t.append($('toolbar').content.cloneNode(true)));
document.querySelectorAll('.toolbox').forEach(t => {
  const b = n => `<button><svg><use href="#t-${n}"/></svg></button>`;
  t.innerHTML = '<span class="dots"></span>' +
    'cursor line par h v note talk arrow arc dots adots fan g fan2 chan rect ell'.split(' ').map(b).join('') +
    '<hr>' + (t.classList.contains('more-tools') ? b('prop') + b('list') : '') + '<button class="play">I▶</button>';
  t.querySelector('button').className = 'on';
});

/* i, open/close top, bottom, high, low, colour (g, r, k = flat) */
const candles = (list, X, Y, w) => list.trim().split(/\s*;\s*/).map(r => {
  const [i, kind, a, b, h, l] = r.split(' ');
  const x = half(X(+i)), top = Math.round(Y(+a)) + 0.5, bot = Math.round(Y(+b)) + 0.5;
  const hi = Math.round(Y(+h)), lo = Math.round(Y(+l));
  const body = kind === 'k' ? line(x - w / 2, top, x + w / 2, top, '#000')
    : rect(x - (w - 1) / 2, top, w - 1, bot - top, kind === 'g' ? '#0a7d0a' : '#f00000', '#000');
  return line(x, hi, x, lo, '#000') + body;
}).join('');

/* DAX, price offset above 6988 */
const dax = `0 g 17.5 17 18 17;1 r 17.5 17 17.5 16.5;2 k 17 17 17 16.5;3 r 17 16.5 17.5 16.5;4 k 16.5 16.5 17 16.5;5 r 17 16.5 17.5 16;6 g 18 16.5 18 16;7 k 17 17 17.5 16;8 g 17 16.5 17.5 16.5;9 g 17.5 17 17.5 17;10 k 17.5 17.5 18 17;11 g 18 17 18 16.5;12 r 18 17.5 18 17;13 g 18 17.5 18 17;14 r 18 17.5 18 17;15 k 17.5 17.5 18 17.5;16 k 17.5 17.5 18 17.5;17 k 17.5 17.5 18 17;18 r 17.5 17 18 17;19 k 17 17 17.5 16.5;20 k 17 17 17 16.5;21 g 19 17.5 19 16.5;22 r 18 17.5 18 16;23 r 17.5 17 18 17;24 g 18 16.5 18 16.5;25 r 18 17.5 18 17;26 r 17.5 17 17.5 17;27 r 17.5 17 17.5 16.5;28 k 17 17 17 17;29 g 17 16.5 17 16.5;30 g 17.5 16.5 18 16.5;31 g 17 16.5 18.5 16.5;32 k 17 17 17.5 17;33 r 18 17.5 18.5 17.5;34 g 19 17.5 19.5 17.5;35 r 19.5 19 21 19;36 g 19.5 18.5 20.5 18.5;37 k 19.5 19.5 20 18.5;38 k 19.5 19.5 19.5 19.5;39 g 20.5 20 20.5 19.5;40 r 19.5 18.5 19.5 18.5;41 k 19 19 19 18;42 r 18.5 16.5 18.5 16.5;43 r 17 15 17 15;44 r 15.5 14 16 14;47 r 9 8 9.5 8;48 g 9 8 10 8;49 g 11.5 9.5 11.5 8.5;50 g 12 11 14 11;51 r 13.5 11.5 14.5 11.5;52 r 12 11 12.5 10.5;53 k 11 11 11.5 10;54 r 11.5 11 11.5 10.5;55 k 10.5 10.5 11.5 10.5;56 r 11 9 11.5 9;57 g 10.5 10 10.5 8.5;58 g 12.5 10.5 12.5 10.5;59 r 12 10.5 12 10;60 k 10.5 10.5 11.5 9.5;61 r 10 8.5 10 8.5;62 k 8.5 8.5 8.5 7.5;63 k 9 9 9 8;64 r 8.5 7 8.5 6.5;65 r 7 6 7 6;66 r 6.5 4.5 6.5 4.5;67 r 4.5 4 4.5 2.5;68 r 4 3.5 4.5 3;69 g 4.5 3.5 4.5 3.5;70 r 4.5 2 4.5 1.5`;
const oecChart = (id, o) => {
  let grid = line(35.5, o.top, 35.5, o.bottom, '#d2d2d2') + line(35, o.top, 3000, o.top, '#d2d2d2', 2), ax = '', tm = '';
  for (const [p, y] of o.prices) {
    grid += line(35, y, 3000, y, '#d2d2d2', 2);
    if (p !== o.now) ax += line(o.right, y, o.right + 2, y, '#999') + text(o.right + 3, y + 4, p);
  }
  o.times.forEach((t, n) => {
    const x = Math.round(o.tx + o.step * n);
    grid += line(x, o.top, x, 2000, '#d2d2d2', 2);
    tm += line(x, o.bottom, x, o.bottom + 4, '#bbb') + text(x - 1, o.bottom + 12, t, 'text-anchor="middle"');
  });
  grid += line(35, o.bottom - 1, 3000, o.bottom - 1, '#d2d2d2', 2);
  put(id + '-plot', 32, o.oy, grid + line(35, o.nowY + 0.5, 3000, o.nowY + 0.5, '#000') + candles(o.data, o.X, o.Y, o.w) + text(39, o.bottom - 5, '©2012 Open E Cry, LLC'));
  put(id + '-axis', o.right, o.oy, ax + rect(o.right, o.nowY - 6, 36 + o.pad, 12, '#000') + text(o.right + 3, o.nowY + 4, o.now, 'fill="#98ee98"') + line(o.right + 2, o.bottom - 1, 760, o.bottom - 1, '#d2d2d2', 2));
  put(id + '-times', 32, o.bottom, tm);
};
oecChart('dax', {
  oy: 52, top: 55, bottom: 456, right: 700, now: '6990.0', nowY: 406, pad: 0, w: 7,
  prices: Array.from({ length: 23 }, (_, n) => [(7010 - n).toFixed(1), Math.round(71.3 + 16.73 * n)]),
  times: '18:44 18:49 18:54 18:59 19:04 19:09 19:14 19:19 19:24 19:29 19:34 19:39 19:44'.split(' '), tx: 82.7, step: 46.8,
  X: i => 36 + 9.36 * i, Y: v => 439.4 - 16.73 * v, data: dax
});

/* ES: quarter-point rows below 1408 */
const es = `0 k 9 9 9 11;1 r 10 11 10 11;2 k 11 11 11 11;3 k 12 12 12 12;4 g 11 12 11 12;5 r 11 12 11 12;6 g 11 12 11 12;7 g 10 12 10 12;8 k 11 11 11 11;9 k 11 11 11 11;10 k 11 11 11 12;11 g 10 11 10 11;14 k 9 9 9 10;15 r 8 9 8 9;16 g 8 9 8 9;17 k 8 8 7 9;18 k 7 7 7 8;19 g 5 7 5 7;20 r 5 6 5 6;21 k 5 5 5 6;22 k 5 5 5 6;23 r 5 6 5 6;24 g 4 5 4 5;25 g 4 5 4 5;26 g 3 4 3 4;27 k 3 3 3 4;28 k 3 3 3 4;29 k 3 3 3 4;30 k 3 3 2 4;31 k 3 3 3 4;32 g 2 3 2 3;33 g 2 3 2 3;34 k 2 2 2 3;35 k 3 3 2 4;36 r 3 4 3 4;37 k 3 3 3 4;38 r 3 4 3 4;39 g 3 4 3 4;40 k 3 3 3 3;41 k 3 3 3 4;42 k 4 4 4 4;43 k 3 3 3 4;44 k 4 4 4 4;45 k 4 4 3 4;46 k 4 4 4 4;47 k 4 4 3 4;48 k 4 4 3 4;49 k 4 4 4 5;50 r 4 5 4 5;51 r 4 6 4 6;52 g 5 6 5 6;53 g 4 5 4 5;54 k 4 4 4 4;55 g 4 5 4 5;56 k 5 5 5 5;57 r 4 5 4 5;58 r 4 5 4 5;59 k 4 4 4 5;60 k 4 4 3 4;61 k 4 4 4 4;62 k 4 4 3 4;63 k 4 4 3 4;64 g 3 4 3 4;65 k 4 4 4 4;66 k 4 4 4 4;67 r 3 4 3 4;68 r 3 4 3 4;69 k 4 4 4 5;70 r 4 5 4 5;71 k 4 4 4 5;72 r 5 6 4 6;73 k 5 5 5 6;74 r 6 7 5 7;75 r 7 8 6 8;76 g 6 7 6 8;77 k 6 6 6 7;78 g 6 7 6 7;79 r 6 7 5 7;80 g 5 6 1 7;81 r 5 6 5 6;82 k 6 6 6 8;83 r 7 8 7 8;84 k 7 7 7 8;85 r 7 8 7 8;86 r 7 8 7 8;87 k 7 7 7 7;88 r 7 9 7 9;89 r 8 9 8 9;90 r 8 9 8 9;91 g 8 9 8 10;92 k 8 8 8 9;93 k 9 9 8 9;94 g 8 9 8 9;95 k 9 9 8 9;96 r 8 10 8 10;98 k 10 10 9 10;99 k 10 10 9 10`;
oecChart('es', {
  oy: 542, top: 545, bottom: 986, right: 694, now: '1405.50', nowY: 868, pad: 4, w: 5,
  prices: Array.from({ length: 14 }, (_, n) => [(1408 - n / 4).toFixed(2), Math.round(573.7 + 29.48 * n)]),
  times: '18:18 18:26 18:34 18:42 18:50 18:58 19:06 19:14 19:22 19:30 19:38 19:46'.split(' '), tx: 88.4, step: 52.75,
  X: i => 35.6 + 6.59 * i, Y: v => 573.2 + 29.48 * v, data: es
});

/* MetaTrader candles: kind, body top, body bottom, high, low in thirds of a pixel */
const mt = (list, oy, kinds) => list.split(';').map((r, i) => {
  const [kind, a, b, h, l] = r.split(' ');
  const x = 1188.5 + 8 * i, y = v => oy + Math.round(v / 3), k = kinds[kind];
  return line(x, y(+(h || a)), x, y(+(l || b)), k[1]) + rect(x - 2, y(+a) + 0.5, 4, Math.max(1, y(+b) - y(+a) - 1), k[0], k[1]);
}).join('');
const rts = `y 852 971 783 984;k 858 881 786 900;k 871 914 831 942;y 856 908 804 915;y 829 869 829 939;k 826 848 768 981;k 852 947 834 988;y 904 953 849 953;y 895 911 846 911;y 643 893 543 893;y 583 635 573 656;y 391 580 345 580;k 385 413 366 483;k 415 542 399 554;k 544 608 489 645;y 538 620 474 624;y 445 557 445 573;k 433 521 387 528;y 471 524 429 543;k 469 509 348 524;y 478 521 462 521;k 481 509 474 531;y 507 521 489 582;k 511 539 486 558;y 501 533 462 537;y 409 494 387 494;y 283 422 225 422;k 280 315 243 333;k 321 324 300 357;k 325 380 285 387;y 370 389 321 389;y 346 367 318 389;y 265 344 249 344;k 259 299 228 321;k 286 446 249 454;k 441 527 408 567;y 493 530 463 530;y 457 496 420 521;k 445 479 442 498;k 471 482 454 501;k 478 497 390 497;k 505 638 468 645;y 565 644 549 648;k 562 599 546 620;y 565 602 516 608;y 532 562 522 562;y 528 536 489 546;k 523 557 523 594;y 469 554 432 557;k 465 479 414 519;k 472 491 447 524;k 487 713 487 713;y 613 710 609 747;k 607 629 537 639;y 610 626 576 644;k 607 620 585 684;y 595 617 595 638;y 565 599 558 644;y 538 560 532 636;k 535 581 495 588;y 490 578 490 581;k 484 497 444 519;k 499 536 471 557;y 528 532 516 557;y 493 521 462 521;k 484 500 462 546;y 496 502 486 552;y 487 491 468 531;y 484 490 426 498;k 487 605 478 605;y 526 602 507 614;k 538 554 484 582;k 550 644 543 650;k 646 651 618 699;y 625 647 606 726`;
const rtsPrices = [[140344, 65], [140184, 99], [140024, 132], [139864, 165], [139704, 199], [139544, 232], [139384, 265], [139229, 298], [139069, 331], [138909, 364], [138754, 397], [138594, 430], [138434, 462]];
const tag = (x, y, w, t, bg, fg) => rect(x, y - 6, w, 12, bg) + text(x + 4, y + 4, t, `style="fill:${fg}"`);
put('rts-plot', 1183, 52,
  line(1183, 54.5, 3000, 54.5, '#000') +
  line(1178, 81.5, 3000, 81.5, '#1a1a9a', 1, '18 9') + line(1183, 208.5, 3000, 208.5, '#bbb') +
  line(1178, 222.5, 3000, 222.5, '#b01818', 1, '18 9') + line(1178, 417.5, 3000, 417.5, '#000', 1, '18 6') +
  `<g shape-rendering="auto">${line(1183, 394, 1460, 55, '#7a12a8', 2)}${line(1183, 242, 1869, 343, '#7a12a8', 2)}</g>` +
  mt(rts, 0, { y: ['#eceb9c', '#2f4f4f'], k: ['#666', '#000'] }) +
  text(1183, 66, '9625 139690 139500 139660', 'class="quote"') + '<path d="M1788 55h10l-5 5z" fill="#bbb"/>');
put('rts-axis', 1869, 52, line(1869.5, 54, 1869.5, 3000, '#000') +
  rtsPrices.map(([p, y]) => line(1869, y + 0.5, 1872, y + 0.5, '#000') + text(1874, y + 4, p)).join('') +
  tag(1871, 81, 38, 140268, '#00f', '#fff') + tag(1871, 209, 38, 139660, '#000', '#fff') + tag(1871, 222, 38, 139591, '#f00', '#fff') + tag(1871, 417, 38, 138656, '#000', '#fff'));
const mtTimes = (id, oy, list, right, c) => put(id, 1183, oy, line(1183, oy + 0.5, right, oy + 0.5, c) +
  list.split(' ').map((t, n) => line(1188.5 + 64 * n, oy, 1188.5 + 64 * n, oy + 4, c) + text(1187 + 64 * n, oy + 13, '3 Sep ' + t)).join(''));
mtTimes('rts-times', 466, '11:35 12:15 12:55 13:35 14:15 14:55 15:35 16:15 16:55 17:35', 1870, '#000');

const sp = `h 732 740 720 755;h 685 743 685 782;h 625 689 622 689;h 541 632 541 636;h 451 530 451 533;h 418 464 411 504;h 295 409 258 409;h 249 293 228 296;h 249 263 219 263;w 247 293 247 333;h 217 296 217 296;w 228 365 213 378;h 369 392 363 414;w 376 446 376 465;h 378 443 378 443;w 351 386 351 386;w 388 413 381 429;h 412 419 405 434;h 421 429 421 441;h 333 431 321 453;w 336 347 336 357;w 351 359 321 359;w 351 371 351 378;w 366 413 366 413;w 409 413 388 441;w 399 410 384 432;h 346 413 336 432;w 336 366 312 378;h 337 359 298 359;w 342 474 291 474;w 474 543 471 558;h 525 539 399 539;w 516 536 510 549;h 406 527 406 527;h 384 402 363 402;w 396 465 388 474;h 445 476 426 480;h 441 444 438 465;h 376 440 336 440;h 316 353 316 393;h 219 293 96 293;h 196 227 196 264;h 111 188 74 216;w 117 167 102 167;h 111 153 111 153;w 108 185 96 185;w 192 324 165 327;w 336 434 336 465;w 421 503 369 519;w 504 515 492 528;h 388 524 363 528;h 396 399 388 441;h 366 402 366 432;h 364 371 330 371;h 279 344 279 348;h 261 269 255 276;w 235 440 216 465;w 441 476 438 489;w 471 488 459 516;h 462 503 462 516;w 453 476 435 486;w 484 536 484 536;w 538 710 538 750;w 711 770 687 789;w 775 828 775 1044;w 849 921 849 968;h 865 957 858 998;h 829 872 825 891;h 787 836 782 836;w 796 1098 796 1107;w 1113 1202 1095 1257;h 1116 1199 1116 1199;h 1051 1115 1047 1115;h 903 1055 903 1062`;
let spGrid = '', spAxis = line(1867.5, 531, 1867.5, 3000, '#fff');
for (let n = 0; n < 13; n++) {
  const y = Math.round(539 + 34.83 * n) + 0.5;
  spGrid += line(1185, y, 1867, y, '#8a8f9a', 1, '3 3');
  spAxis += line(1867, y, 1870, y, '#fff') + text(1871, y + 4, (1438.45 - n / 4).toFixed(2));
}
for (let n = 0; n < 22; n++) spGrid += line(1188.5 + 32 * n, 532, 1188.5 + 32 * n, 964, '#8a8f9a', 1, '5 4');
const spTag = (y, t, bg, fg) => rect(1869, y - 6, 40, 12, bg) + text(1871, y + 4, t, `style="fill:${fg}"`);
put('sp-plot', 1183, 528, line(1183, 531.5, 1868, 531.5, '#fff') + spGrid + rect(1185, 534, 142, 10, '#000') +
  line(1183, 831.5, 3000, 831.5, '#8a8f9a') + line(1186, 945, 3000, 945, '#d01010', 2) +
  mt(sp, 530, { h: ['#000', '#2fd62f'], w: ['#fff', '#2fd62f'] }) +
  text(1185, 543, '1435.99 1436.35 1435.98 1436.35', 'class="quote"') + '<path d="M1786 532h10l-5 5z" fill="#8a8f9a"/>');
put('sp-axis', 1867, 528, spAxis + spTag(831, '1436.35', '#fff', '#000') + spTag(944, '1435.53', '#f00', '#300'));
mtTimes('sp-times', 964, '14:36 14:44 14:52 15:00 15:08 15:16 15:24 15:32 15:40 15:48', 1868, '#fff');

/* order book */
const vol = '13 7 67 105 57 48 17 40 72 25 59 37 59 41 28 15 21 18 53 44 7 10 14 13 9 4 - - - 3 8 16 6 76 65 22 27 29 54 34 29 23 23 38 3 18 19 28 8 37 5 22 26 47 51 47 15 11 27 15 22 60 67 73 12 18 34 52 193 15 26 26 22 80 15 10 22 47'.split(' ');
$('ladder').innerHTML = vol.map((v, k) => {
  const price = 139815 - 5 * k, side = k < 26 ? 'ask' : 'bid';
  if (v === '-') return `<tr class="spread"><td style="--w:0px"></td><td>${k === 27 ? '<svg><path d="M4 1.500h17M0 3.500h25M4 5.500h17" stroke="#2030c0"/></svg>' : ''}</td></tr>`;
  return `<tr class="${side}${k === 25 || k === 29 ? ' best' : ''}"><td style="--w:${Math.round(v * 0.297)}px">${v}</td><td>139 ${price % 1000}</td></tr>`;
}).join('');

const col = (skip, s) => `<div class="c${skip ? '' : '0'}" style="padding-top:${3 + 12 * skip}px">` + s.split(' ').map(e => {
  const [v, c] = e.split(':');
  const w = skip ? Math.min(34, Math.round(v * 0.108)) : c ? 9 : 0;
  return `<div class="cell" style="--c:#${c || 'fff'};--w:${w}px">${v === '_' ? '&nbsp;' : v}</div>`;
}).join('') + '</div>';
$('clusters').innerHTML =
  col(0, '_ _ 3:da4 5:f80 _ 1 1 2 5 0 6:ad1 9:fc4 3:f82 8:fa2 8 4 _ _') +
  col(3, '19:2a6 44:157a1a 13 27:cddc4a 51:4a8f20 55:6aa820 107:f08a20 111:f08010 99:f5b820 136:f8f820 120:f5e820 100:f08a20 104:e86020 102:e83a18 57:f09020 102:f5c020 44:f5e020 83:f5e020 80:f0b020 86:d83820 180:e03818 107:f8f820 163:f08a20 179:f8f820 140:e87020 210:ffb020 196:e84820 195:e84820 143:f08020 241:ffa010 165:d02018 107:d82818 58:f09020 113:f0a020 143:d82020 58:b81818 64:c02010 24:e88080') +
  col(28, '19:2a6 78:1a7a1a 70:1f7f1f 69:90c020 65:d8e820 95:c8e020 139:3a8f1a 151:6aa820 198:f8f820 285:ffb010 297:ffb010 246:ffb010 149:f07818 294:ffa818 248:ffa818 840:b0d810 245:ffb010 249:ffb810 236:f06818 132:f8b018 98:f8a818 30:80b050 52:e87030 96:e04010 62:e86820 60:e85820 53:d81818 13') +
  col(21, '58:ffb030 26:2a6 123:1a7f1a 88:2a7f1a 90:3f9020 57:6aa820 111:4a9a1a 138:2f8a1a 205:ffa820 90:78b818 113:f8f820 98:f8f010 142:78b818 55:f8a818 157:d0e820 85:60a828 203:50a018 172:f0f820 128:c0d820 141:f8b820 123:f8f020 147:f07018 561:40980a 174:a8d820 175:c0e818 286:a0d010 538:ff7808 263:e8f808 214:ffe010 311:ffb808 218:f08820 159:f07820 191:e83818 101:f07818 200:e84810 123:f07018 53:f8b828 111:f09018 127:e86018 74:e82010 289:ff1808 177:e81810 226:e80808');

/* trades and index line */
const pts = (s, oy) => s.split(' ').map(p => { const [x, y] = p.split(','); return Math.round(x / 3) - 146 + ',' + (Math.round(y / 3) + oy); }).join(' ');
const path = (s, oy, c, w) => `<polyline points="${pts(s, oy)}" fill="none" stroke="${c}" stroke-width="${w}" stroke-linejoin="round"/>`;
const dot = (x, y, r, c, t = '') => { const [px, py] = pts(x + ',' + y, 237).split(','); return `<circle cx="${px}" cy="${py}" r="${r}" fill="${c}" stroke="#222"/>` + (t ? text(px, +py + 4, t) : ''); };
const G = '#6f9632', P = '#f46a6a';
let run = '';
for (let x = 470; x <= 560; x += 10) run += dot(x, 71, x < 485 ? 3 : 4, G);
for (let x = 794; x < 888; x += 11) run += dot(x, 214, x < 815 ? 3 : 4, G);
$('trades').innerHTML =
  path('438,321 510,321 528,357 548,357 566,35 576,75 602,249 622,177 690,177 708,213 888,213', 237, '#d81010', 2) +
  path('438,429 456,429 475,467 494,429 549,429 567,80 585,286 602,286 620,222 638,249 660,214 692,222 710,280 728,286 746,357 764,318 784,324 818,393 836,357 888,357', 237, '#16e016', 2) +
  path('440,257 455,260 474,267 490,262 497,250 510,122 520,130 540,137 550,128 557,95 567,18 580,18 592,38 604,58 620,58 636,15 670,14 698,27 720,20 745,14 760,10 888,10', 497, '#0000f0', 4) +
  dot(457, 71, 3, G) + run + dot(446, 106, 5, G, '2') + dot(579, 72, 9, P, '34') +
  dot(638, 178, 3, G) + dot(651, 178, 3, G) + dot(674, 178, 5, G, '3') +
  [[614, 214], [626, 214], [685, 214], [602, 250], [590, 286], [697, 286], [709, 286], [734, 286], [769, 322], [854, 322]].map(p => dot(p[0], p[1], 3, P)).join('') +
  dot(661, 214, 5, P, '2') + dot(758, 250, 5, P, '2') + dot(781, 358, 5, P, '2') +
  dot(722, 214, 3, G) + dot(746, 214, 3, G) + dot(842, 214, 5, G, '2') + dot(866, 214, 5, G, '2') +
  rect(102, 483, 46, 12, '#0000e8') + text(125, 493, '+0, 94%', 'fill="#ffffb0"');
```
